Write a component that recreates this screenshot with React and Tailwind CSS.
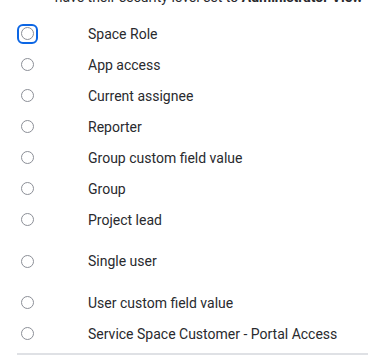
import React from "react";

const options = [
  { label: "Space Role", focused: true },
  { label: "App access" },
  { label: "Current assignee" },
  { label: "Reporter" },
  { label: "Group custom field value" },
  { label: "Group" },
  { label: "Project lead" },
  { label: "Single user", tall: true },
  { label: "User custom field value" },
  { label: "Service Space Customer - Portal Access" },
];

const Radio = ({ focused }) => (
  <div
    className={`flex items-center justify-center w-[21px] h-[20px] rounded-[6px] ${
      focused ? "border-[2.5px] border-[#0c66e4]" : "border-[2.5px] border-transparent"
    }`}
  >
    <div className="w-[13px] h-[13px] rounded-full border border-[#8c8f97] bg-white" />
  </div>
);

const App = () => {
  const [selected, setSelected] = React.useState(null);

  return (
    <div
      className="w-[368px] h-[362px] overflow-hidden bg-white text-[#292a2e] text-[14px]"
      style={{ fontFamily: "Roboto, 'Noto Sans', sans-serif" }}
    >
      {/* clipped line from the list above */}
      <div className="flex items-baseline gap-[8px] pl-[42px] -mt-[13px] h-[31px] whitespace-nowrap leading-[20px]">
        <span>•</span>
        <span>
          have their security level set to <b className="font-bold">Administrator View</b>
        </span>
      </div>

      <div className="flex flex-col">
        {options.map((opt) => (
          <label
            key={opt.label}
            onClick={() => setSelected(opt.label)}
            className={`flex items-center cursor-pointer ${opt.tall ? "h-[52px]" : "h-[31px]"}`}
          >
            <div className="w-[88px] pl-[17px]">
              <Radio focused={opt.focused} checked={selected === opt.label} />
            </div>
            <span className="leading-[20px]">{opt.label}</span>
          </label>
        ))}
      </div>

      <div className="ml-[17px] mt-[4px] h-[2px] bg-[#dfe1e5]" />
    </div>
  );
};

export default App;
